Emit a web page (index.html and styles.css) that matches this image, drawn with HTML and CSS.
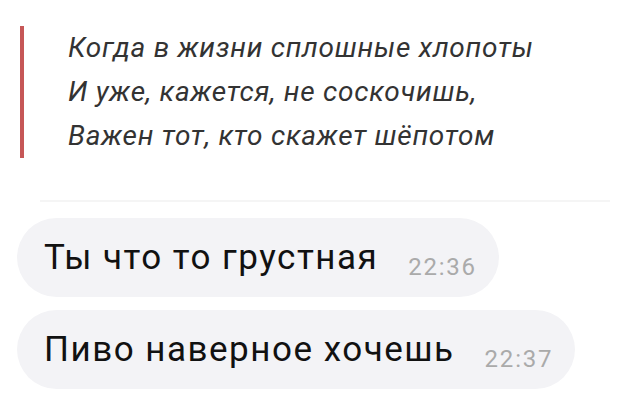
FILE: index.html
```html
<!DOCTYPE html>
<html lang="ru">
<head>
  <meta charset="UTF-8">
  <meta name="viewport" content="width=device-width, initial-scale=1.0">
  <title>Чат</title>
  <link rel="stylesheet" href="styles.css">
</head>
<body>
  <blockquote class="quote">
    <p>Когда в жизни сплошные хлопоты</p>
    <p>И уже, кажется, не соскочишь,</p>
    <p>Важен тот, кто скажет шёпотом</p>
  </blockquote>

  <div class="divider"></div>

  <div class="messages">
    <div class="bubble">
      <span class="text">Ты что то грустная</span>
      <span class="time">22:36</span>
    </div>
    <div class="bubble">
      <span class="text">Пиво наверное хочешь</span>
      <span class="time">22:37</span>
    </div>
  </div>
</body>
</html>
```

FILE: styles.css
```css
body {
  margin: 0;
  background: #fff;
  font-family: Roboto, "Liberation Sans", sans-serif;
}
.quote {
  margin: 26px 0 0 20px;
  padding: 0 0 0 44px;
  border-left: 4px solid #c65757;
}
.quote p {
  margin: 0;
  font-style: italic;
  font-size: 28px;
  line-height: 44px;
  letter-spacing: 0.75px;
  color: #333;
}
.divider {
  margin: 42px 30px 0 40px;
  height: 2px;
  background: #f5f5f5;
}
.messages {
  display: flex;
  flex-direction: column;
  align-items: flex-start;
  gap: 13px;
  margin: 16px 0 0 17px;
}
.bubble {
  display: flex;
  align-items: baseline;
  height: 79px;
  line-height: 79px;
  padding: 0 22px 0 27px;
  border-radius: 40px;
  background: #f3f3f6;
}
.text {
  font-size: 35px;
  letter-spacing: 1.5px;
  color: #111;
}
.time {
  margin-left: 30px;
  font-size: 24px;
  letter-spacing: 1.8px;
  color: #aaa;
  position: relative;
  top: 6px;
}
```
